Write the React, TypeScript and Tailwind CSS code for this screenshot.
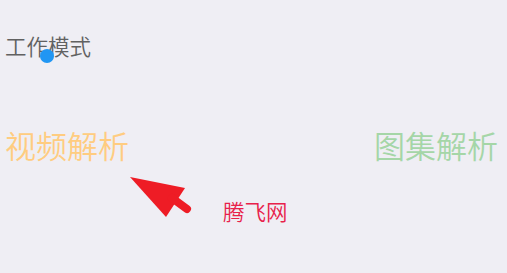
import React from 'react';

const cjk = { fontFamily: '"Noto Sans CJK SC", "Noto Sans", sans-serif' };

function Arrow() {
  return (
    <svg className="absolute left-0 top-0" width="507" height="273" viewBox="0 0 507 273">
      <polygon points="130,177 185,188 166,217" fill="#ee1c25" />
      <line x1="172" y1="198" x2="187" y2="209" stroke="#ee1c25" strokeWidth="8" strokeLinecap="round" />
    </svg>
  );
}

export default function App() {
  return (
    <div className="relative w-[507px] h-[273px] overflow-hidden bg-[#efeef4] font-[350]" style={cjk}>
      <div className="flex flex-col pl-[5px] pr-[9px] pt-[31px]">
        <div className="relative text-[21.5px] leading-[30px] text-[#616161]">
          工作模式
          <span className="absolute left-[35px] top-[18px] w-[14px] h-[14px] rounded-full bg-[#2196f3]" />
        </div>
        <div className="flex items-center justify-between mt-[62px] text-[31px] leading-[44px]">
          <span className="text-[#ffcc80]">视频解析</span>
          <span className="text-[#a5d6a7]">图集解析</span>
        </div>
      </div>
      <Arrow />
      <div className="absolute left-[223px] top-[196px] text-[21.5px] leading-[30px] text-[#e8214a]">腾飞网</div>
    </div>
  );
}
